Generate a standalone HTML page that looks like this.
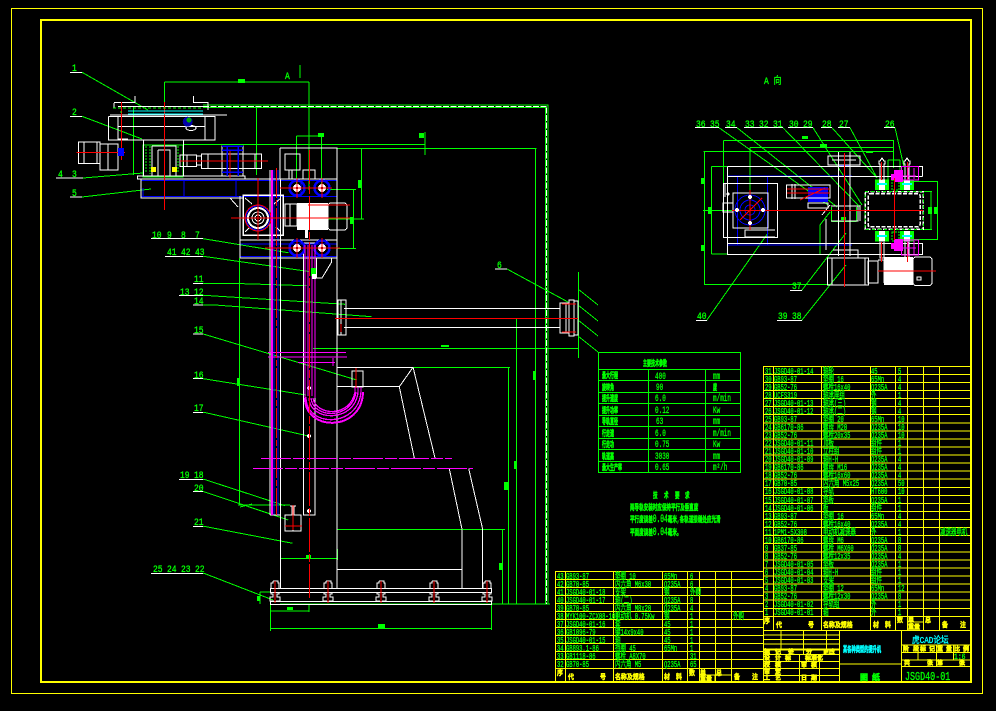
<!DOCTYPE html>
<html lang="zh"><head><meta charset="utf-8"><title>JSGD40-01</title>
<style>
html,body{margin:0;padding:0;background:#000;width:996px;height:711px;overflow:hidden}
svg{display:block}
text{font-family:"Liberation Mono","Noto Sans CJK SC",monospace;font-size:9px;fill:#0f0;stroke:#0f0;stroke-width:.35;transform-box:fill-box;transform-origin:0 50%;transform:scaleX(.61)}
.l{font-size:10px;transform:scaleX(.8)}
.v{font-size:10px;transform:scaleX(.6)}
.b{font-size:8px;font-weight:bold;stroke-width:.6;transform:scaleX(.5)}
.t{font-size:8px;font-weight:bold;stroke-width:.5;transform:scaleX(.57)}
.t tspan{font-size:11px;font-weight:normal}
.y{fill:#ff0;stroke:#ff0;font-size:7px;font-weight:bold;stroke-width:.5;transform:scaleX(.85)}
.s{fill:#ff0;stroke:#ff0;font-size:6px;font-weight:bold;stroke-width:.6;transform:none}
.c{fill:#0ff;stroke:#0ff}
.big{font-size:12px;transform:scaleX(.7)}
path,rect,circle,line{fill:none}
</style></head><body>
<svg width="996" height="711" viewBox="0 0 996 711" xmlns="http://www.w3.org/2000/svg" shape-rendering="crispEdges">
<defs>
<g id="ring"><circle r="7.5" stroke="#00f" stroke-width="2.5"/><circle r="4" style="fill:#fff"/><circle r="1.4" style="fill:#000"/><path d="M-10,0H10M0,-10V10" stroke="#f00"/></g>
<g id="bolt"><path d="M-2,581h5v2h1v5M-2,581v2h-2v5M-4,592v2h2v3h-3v4h4M4,592v2h-2v3h3v4h-4" stroke="#fff" stroke-width="1.3"/><path d="M0,581V603" stroke="#f00"/></g>
</defs>
<rect width="996" height="711" style="fill:#000"/>

<!-- frames -->
<rect x="11.5" y="8.5" width="971" height="685" stroke="#ff0"/>
<rect x="41" y="20" width="930" height="662" stroke="#ff0" stroke-width="2"/>

<!-- long dims / dashed -->
<g stroke="#0f0">
<path d="M203,105H548V108M203,107.5H545.5V604M548,108V604"/>
<path d="M183,144.3H425M425,132V155M133,148.3M337,148.3H536.7M535.7,148.3V604M516.7,319V604M508.3,367.3V604M502.3,529.3V604M413,367.3H510M337,529.3H505M313,348.3H578M578.3,272V358"/>
<path d="M280,604H550M260,592V604M260,592H270"/>
<path d="M578,289L598,305M578,305L598,321M578,320L598,336M578,336L598,352"/>
<path d="M270.3,604V631M309,604V612M491.7,604V630M270.3,611H309M270.3,628.3H491.7"/>
<path d="M280.7,549V560M337.3,549V560M280.7,558.3H337.3"/>
<path d="M164.3,82H309M164.3,82V125M309,82V190M133.3,107V175M256.7,107V175M300,65V78"/>
<path d="M296.7,136H321.7M296.7,136V188M321.7,136V188"/>
<path d="M361.7,148.3V219M328,219H364M353.3,189.3V248.7M327,189.3H356M337,248.7H356"/>
<path d="M239.3,258V505M238,505H290M240,507L252,504"/>
</g>
<path d="M203,106.4H546.7V604" stroke="#fff" stroke-dasharray="6 1.5"/>
<g style="fill:#0f0">
<rect x="238" y="79" width="7" height="4" style="fill:#0f0"/><rect x="318" y="133" width="6" height="4" style="fill:#0f0"/>
<rect x="358" y="180" width="4" height="8" style="fill:#0f0"/><rect x="350" y="217" width="4" height="7" style="fill:#0f0"/>
<rect x="419" y="133" width="5" height="5" style="fill:#0f0"/><rect x="514" y="461" width="3" height="8" style="fill:#0f0"/><rect x="533" y="371" width="3" height="9" style="fill:#0f0"/>
<rect x="504" y="482" width="4" height="8" style="fill:#0f0"/><rect x="499" y="563" width="3" height="7" style="fill:#0f0"/>
<rect x="237" y="378" width="3" height="8" style="fill:#0f0"/><rect x="306" y="555" width="5" height="4" style="fill:#0f0"/>
<rect x="287" y="607" width="6" height="3" style="fill:#0f0"/><rect x="378" y="624" width="7" height="4" style="fill:#0f0"/>
<rect x="257" y="596" width="3" height="5" style="fill:#0f0"/><rect x="441" y="345" width="8" height="2" style="fill:#0f0"/>
</g>

<!-- leaders -->
<g stroke="#0f0">
<path d="M70,72.3H82L148,110M70,116.3H82L142,139M56,178H83L143,173M70,197H82L151,189"/>
<path d="M151,238.7H203.3L288.3,252.7M165,256.3H203.3L310,271.7M193,283.3H230L306.7,285.7M179.3,295.7H210L345,304.3M193.3,305H215L371.7,316.7"/>
<path d="M193.3,334H203.3L356.7,380M193.3,378.7H203.3L306,395M193.3,412.3H204L308.3,436M179.3,479.3H204L285,505.7M193.3,491.7H204L288.3,520M193.3,526.3H204L292.7,543.3M151,573.3H204L273,600"/>
<path d="M495,269H507L568,302"/>
<path d="M719,127.7L828,205M737,127.7L837,207M783,127.7L860,207M813,127.7L862,205M832,127.7L877,178M850,127.7L877,178M895,127.7L904,167"/>
<path d="M790,290.3H801.7L846,233M777.3,320.3H801.7L846,265M696,320.3H706.7L768,233"/>
</g>
<path d="M70,72.3H82M70,116.3H82M56,178H83M70,197H82M151,238.7H203M165,256.3H203M193,283.3H203M179,295.7H203M193,305H203M193,334H203M193,378.7H203M193,412.3H203M179,479.3H203M193,491.7H203M193,526.3H203M151,573.3H203M495,269H507M695,127.7H719M725,127.7H737M744,127.7H783M788,127.7H813M821,127.7H832M838,127.7H850M884,127.7H895M790,290.3H802M777,320.3H802M696,320.3H707" stroke="#fff"/>

<!-- structure left -->
<g stroke="#0f0"><rect x="143" y="145" width="40" height="32"/></g>
<g stroke="#00f">
<path d="M141,180.7H337M141,196.7H337M143,188V196M184,181V196M236,181V196M240,240H337M240,244H337M240,256.5H337M274,170V515M278,170V515M301,181V196"/>
</g>
<g stroke="#fff">
<path d="M141,179H337V588M141,179V198H243M280,148H337V179M280,148V179M280.3,179V588"/>
<path d="M270,170V515M280.7,258V515M270,515H280"/>
<path d="M303.3,243V515H315V243H303.3"/>
<rect x="243" y="195" width="40" height="40" stroke-width="1.5"/>
<path d="M245,198L252,204M281,198L274,204M245,232L250,227M281,232L276,227"/>
<rect x="285" y="204" width="12" height="22"/><path d="M290,204V226"/>
<rect x="328" y="203" width="19" height="27" rx="3"/>
<path d="M240,240H337M240,258H337M240,240V258M240,196V240"/>
<rect x="285" y="154" width="15" height="16"/><path d="M292,170V179M289,170V179"/>
<rect x="303" y="170" width="12" height="9"/>
<path d="M230,198L238,207M316.7,258H331.7V262L322,278H316.7V258"/>
<path d="M108.3,116.7H215V140H108.3V116.7M118,117V140M205,117V140M114,102.7H135V96M135,102.7M114,103V108M193.3,96V102.7H208V110M118,106.7H203M110,115H227M118,126.7H205M118,139L128,139"/>
<path d="M78.3,142H100V163.3H78.3ZM84,142V163.3M97,142V163M100,144H118V170H100ZM108,144V170"/>
<path d="M143.3,140H183.3M143.3,140V176.7M183.3,140V176.7M152,146H176V176M152,146V176M158,150H170V176M158,150V176"/>
<path d="M180,155H196.7V166.7H180ZM187,155V166.7M201.7,154H261.7V168.3H201.7ZM208,154V168.3M255,154V168.3M196,156L202,156M196,165L202,165"/>
<rect x="222" y="146" width="21" height="30"/>
<path d="M137.3,176H245V179H137.3Z"/>
<ellipse cx="191" cy="128" rx="5" ry="2.5" stroke="#fff" style="fill:none"/>
<rect x="285" y="515" width="16" height="16"/><path d="M293,515V531M290,506H296M292,506V515M294,506V515"/>
<rect x="352" y="371" width="11" height="16"/>
</g>
<rect x="297" y="203" width="31" height="27" style="fill:#fff"/>
<rect x="305" y="230" width="3" height="8" style="fill:#fff"/>
<g stroke="#fff" style="fill:#fff"><circle cx="309" cy="388" r="1.6" style="fill:#fff"/><circle cx="309" cy="436" r="1.6" style="fill:#fff"/><circle cx="309" cy="511" r="1.6" style="fill:#fff"/></g>
<path d="M337,367.3H413L399.3,386.7H337M413,367L435,458M399.3,386.7L414.3,458M449.3,468.7L462,529.3M468.7,468.7L482.7,529.3M462,529.3V588M482.5,529.3V588M337,569.3H462" stroke="#fff"/>
<path d="M344,308.3H560M344,327.3H560" stroke="#fff"/>
<path d="M338,300H346V335H338ZM341,300V335M560,303H566V333H560ZM569,300H574V336H569ZM574,301H578V335H574ZM566,303H569M566,333H569" stroke="#fff"/>
<path d="M270.3,588.3H491.7V592.3H270.3ZM270.3,601.3H491.7V604.3H270.3Z" stroke="#fff"/>
<use href="#bolt" x="275"/><use href="#bolt" x="328"/><use href="#bolt" x="381"/><use href="#bolt" x="434"/><use href="#bolt" x="487"/>

<!-- gearbox circle -->
<circle cx="258" cy="218" r="13" stroke="#f00"/><circle cx="258" cy="218" r="12" stroke="#00f"/><circle cx="258" cy="218" r="10" stroke="#fff" stroke-width="2"/><circle cx="258" cy="218" r="6" stroke="#fff"/><circle cx="258" cy="218" r="3" stroke="#fff"/>
<use href="#ring" x="297" y="188"/><use href="#ring" x="322" y="188"/><use href="#ring" x="297" y="248"/><use href="#ring" x="322" y="248"/>

<!-- magenta -->
<g stroke="#f0f">
<path d="M272,170V515" stroke-width="2"/>
<path d="M305,245V398M308,245V396M312,245V396M315,245V398"/>
<path d="M306,397C306,428 358,428 361,392V387M309,398C310,422 355,423 358,392V387M313,398C316,416 350,418 355,392V387M311,398C313,419 352,420 356,392" stroke-width="1.3"/>
<path d="M305,398C305,432 362,432 363,392" stroke-width="2"/>
<path d="M268,352.3H346M268,357H347M298,362.3H335M333,358V366"/>
<path d="M261,458.3H452" stroke-dasharray="30 2 12 2"/>
<path d="M253,468.3H473" stroke-dasharray="30 2 12 2"/>
</g>

<!-- red -->
<g stroke="#f00">
<path d="M309.3,150V600" stroke-dasharray="34 2 8 2"/>
<path d="M276.7,168V515" stroke-dasharray="30 2 6 2"/>
<path d="M164.3,102V210M121.7,102V160M76.7,152.3H125M180,161H268M230,150V178M258,178V240M231,218H350M308,205H350M265,248H340M280,188H330"/>
<path d="M335,318.3H578M562,304H576M562,332H576M341,324V332"/>
<path d="M293,505V530M285,526H302M356,368V388"/>
</g>

<!-- upper cyan + details -->
<path d="M128,111H203M128,114H203" stroke="#0ff"/>
<path d="M113,108H203M120,112L122,112" stroke="#0f0" stroke-dasharray="3 2"/>
<circle cx="187.7" cy="121.7" r="5" style="fill:#00a"/><circle cx="189" cy="120" r="2.5" style="fill:#0a0"/>
<rect x="118" y="148" width="6" height="8" style="fill:#00f"/>
<path d="M146,146V172M150,146V174M178,146V172" stroke="#0f0" stroke-dasharray="2 1"/>
<rect x="151" y="167" width="5" height="5" style="fill:#ff0"/><rect x="172" y="167" width="5" height="5" style="fill:#ff0"/>
<path d="M222,146H243M222,150H243M222,172H243M227,146V176M238,146V176" stroke="#00f" stroke-width="1.5"/>
<rect x="311" y="268" width="5" height="8" style="fill:#0f0"/>
<rect x="312" y="274" width="4" height="5" style="fill:#fff"/>

<!-- ========== right view ========== -->
<g stroke="#0f0">
<path d="M723.3,140.3H893.3M750,147.3H893.3M703.3,151.7H893.3M723.3,140.3V186M750,147.3V193M704.7,151.7V284.3H830M711.3,166.7V254M711.3,166.7H727M711.3,254H727M703,210.3H737"/>
<path d="M893.3,140V168M913,181.7H938M913,239.3H938M937.7,181.7V239.3M923,191.7H932M923,229.3H932M931,191.7V229.3"/>
<path d="M831.7,221.7H856.7M831.7,207V221.7M856.7,207V221.7M888,160H900M888,160V180M900,160V180"/>
<path d="M820,254V225L830,212"/>
</g>
<g style="fill:#0f0"><rect x="802" y="136" width="6" height="3" style="fill:#0f0"/><rect x="820" y="144" width="7" height="3" style="fill:#0f0"/><rect x="866" y="151" width="7" height="2" style="fill:#0f0"/>
<rect x="701" y="178" width="4" height="6" style="fill:#0f0"/><rect x="701" y="245" width="4" height="6" style="fill:#0f0"/><rect x="708" y="207" width="4" height="7" style="fill:#0f0"/>
<rect x="928" y="207" width="4" height="7" style="fill:#0f0"/><rect x="934" y="207" width="4" height="7" style="fill:#0f0"/><rect x="841" y="217" width="5" height="3" style="fill:#0f0"/></g>
<g stroke="#00f">
<path d="M728,176H840M728,245H840M737.3,176V245M767.7,176V245M837,176H852M837,245H852"/>
<circle cx="750" cy="210" r="15"/><circle cx="750" cy="210" r="10"/><circle cx="750" cy="210" r="5"/>
<path d="M838,166H850" stroke-width="2"/>
</g>
<rect x="808" y="187" width="20" height="15" style="fill:#00f"/>
<g stroke="#fff">
<path d="M727.3,166.7H922.7V176.7M727.3,176.7H922.7M727.3,166.7V254.3H922.7V243.3H727.3M922.7,166.7V176.7"/>
<rect x="723.3" y="183.3" width="54.4" height="54.4"/>
<rect x="733" y="193" width="35" height="35"/>
<path d="M723,203H733V212H723ZM725,183V197M775,230H745V237H775M786.7,185H830V198H786.7ZM792,184V199M795,184V199M808,203H828V208H808Z"/>
<path d="M838.3,152V256M850,152V256M828,156H860V165H828ZM832,160H856M833,250H858V258H833"/>
<path d="M827.7,258H868.3V285H827.7ZM832,258V285M865,258V285M868,261H878V283H868ZM878,260H884V283"/>
<rect x="913" y="257" width="19" height="28.5" rx="3"/>
<path d="M826,219V250M822,215L830,205M831,206H858V221H831M860,205V221"/>
</g>
<rect x="884" y="257" width="29" height="28" style="fill:#fff"/>
<rect x="917" y="277" width="4" height="3" stroke="#fff"/>
<g stroke="#fff" stroke-width="1.5" stroke-dasharray="4 1.5">
<rect x="865" y="191.7" width="58.3" height="37.6"/>
<rect x="868" y="193.7" width="52" height="33" rx="2"/>
</g>
<g stroke="#0f0" stroke-dasharray="3 3"><rect x="865" y="191.7" width="58.3" height="37.6"/></g>
<!-- bearings -->
<g>
<rect x="875" y="179.3" width="14" height="10.7" style="fill:#0f0"/><rect x="900" y="179.3" width="14" height="10.7" style="fill:#0f0"/>
<rect x="875" y="231" width="14" height="10.7" style="fill:#0f0"/><rect x="900" y="231" width="14" height="10.7" style="fill:#0f0"/>
<rect x="879" y="179.3" width="6" height="10.7" style="fill:#fff"/><rect x="904" y="179.3" width="6" height="10.7" style="fill:#fff"/>
<rect x="879" y="231" width="6" height="10.7" style="fill:#fff"/><rect x="904" y="231" width="6" height="10.7" style="fill:#fff"/>
<path d="M877,184H887M902,184H912M877,236H887M902,236H912" stroke="#0ff" stroke-width="2"/>
<path d="M880,180V164h-1v-3h1l2,-3 2,3h1v3h-1V180M905,180V164h-1v-3h1l2,-3 2,3h1v3h-1V180M880,242V258h4V242M905,242V258h4V242" stroke="#fff"/>
<path d="M881.7,162V180M907.3,162V180M881.7,242V262M907.3,242V262" stroke="#f00"/>
<path d="M892,180H899V190H892ZM892,232H899V241H892Z" stroke="#0f0" stroke-dasharray="2 1"/>
</g>
<g>
<rect x="894" y="170" width="9" height="12" style="fill:#f0f"/><rect x="891" y="174" width="4" height="6" style="fill:#f0f"/>
<rect x="901.7" y="166.7" width="16.6" height="13.3" stroke="#f0f"/><path d="M903,176H916M908,168V179M914,168V179" stroke="#f0f"/>
<rect x="894" y="239" width="9" height="12" style="fill:#f0f"/><rect x="891" y="243" width="4" height="6" style="fill:#f0f"/>
<rect x="901.7" y="240" width="16.6" height="15" stroke="#f0f"/><path d="M903,248H916M908,241V254M914,241V254" stroke="#f0f"/>
</g>
<g stroke="#f00">
<path d="M732,210.3H923M844.3,153V287M894.3,178V240M750,190V230M740,220L762,198M878,271H936"/>
<path d="M787,189H830M787,193H830M800,200L825,188"/>
</g>
<g style="fill:#fff"><circle cx="750" cy="197" r="2" style="fill:#fff"/><circle cx="750" cy="223" r="2" style="fill:#fff"/><circle cx="737" cy="210" r="2" style="fill:#fff"/><circle cx="763" cy="210" r="2" style="fill:#fff"/><circle cx="728" cy="194" r="1.5" style="fill:#fff"/></g>

<!-- params table -->
<g stroke="#0f0">
<rect x="598.3" y="352.3" width="142.4" height="120.4"/>
<path d="M598,369.3H741M598,380.7H741M598,392.3H741M598,403.7H741M598,415.3H741M598,426.7H741M598,438.3H741M598,449.7H741M598,461.3H741M648.3,369.3V472.7M705.3,369.3V472.7"/>
</g>
<text class="b" x="643" y="366">主要技术参数</text>
<text class="b" x="602" y="378">最大行程</text><text class="v" x="655" y="379">400</text><text class="v" x="713" y="379">mm</text>
<text class="b" x="602" y="390">旋转角</text><text class="v" x="656" y="390">90</text><text class="b" x="713" y="390">度</text>
<text class="b" x="602" y="401">提升速度</text><text class="v" x="655" y="401">6.0</text><text class="v" x="713" y="401">m/min</text>
<text class="b" x="602" y="413">提升功率</text><text class="v" x="655" y="413">0.12</text><text class="v" x="713" y="413">Kw</text>
<text class="b" x="602" y="424">导轨直径</text><text class="v" x="656" y="424">63</text><text class="v" x="713" y="424">mm</text>
<text class="b" x="602" y="436">行走速</text><text class="v" x="655" y="436">6.0</text><text class="v" x="713" y="436">m/min</text>
<text class="b" x="602" y="447">行走功</text><text class="v" x="655" y="447">0.75</text><text class="v" x="713" y="447">Kw</text>
<text class="b" x="602" y="459">轨道高</text><text class="v" x="655" y="459">3030</text><text class="v" x="713" y="459">mm</text>
<text class="b" x="602" y="470">最大生产率</text><text class="v" x="655" y="470">0.65</text><text class="v" x="713" y="470">m²/h</text>

<!-- tech requirements -->
<text class="t" x="653" y="498">技</text><text class="t" x="664" y="498">术</text><text class="t" x="675" y="498">要</text><text class="t" x="685" y="498">求</text>
<text class="t" x="630" y="510">两导轨安装时应保持平行及垂直度</text>
<text class="t" x="630" y="522">平行度误差<tspan>0.04</tspan>毫米,各轨道接缝处应光滑</text>
<text class="t" x="630" y="535">平面度误差<tspan>0.04</tspan>毫米。</text>

<!-- bom right -->
<g stroke="#ff0">
<path d="M763.3,366.3H971M763.3,374.4H971M763.3,382.4H971M763.3,390.5H971M763.3,398.6H971M763.3,406.6H971M763.3,414.7H971M763.3,422.8H971M763.3,430.8H971M763.3,438.9H971M763.3,447H971M763.3,455H971M763.3,463.1H971M763.3,471.1H971M763.3,479.2H971M763.3,487.3H971M763.3,495.3H971M763.3,503.4H971M763.3,511.5H971M763.3,519.5H971M763.3,527.6H971M763.3,535.7H971M763.3,543.7H971M763.3,551.8H971M763.3,559.9H971M763.3,567.9H971M763.3,576H971M763.3,584.1H971M763.3,592.1H971M763.3,600.2H971M763.3,608.3H971M763.3,616.3H971"/>
<path d="M763.3,366V682M773.3,366V630M821.7,366V630M870.3,366V630M895.7,366V630M907.3,366V630M923.3,366V630M939.3,366V630"/>
<path d="M763,630.3H971M763,635H840M763,639.3H840M763,644H840M763,649H840M763,654.3H840M763,661.7H840M763,668.7H840M763,675.7H840M781,630V649M803.7,630V654M826.3,630V649M799.3,654V682M819.3,654V682"/>
<path d="M839.7,630V682M901.3,630V682M840,664H901M901,645H971M901,652.3H971M901,660H971M901,666.3H971M918,645V660M936.3,645V666M953.7,645V660M907,622H923"/>
<path d="M763,649.5H840" stroke-width="1.5"/>
</g>
<!-- bom left -->
<g stroke="#ff0">
<path d="M555.3,571.3H763M555.3,579.3H763M555.3,587.4H763M555.3,595.4H763M555.3,603.4H763M555.3,611.5H763M555.3,619.5H763M555.3,627.5H763M555.3,635.6H763M555.3,643.6H763M555.3,651.6H763M555.3,659.7H763M555.3,668.7H763"/>
<path d="M555.3,571V682M565.3,571V682M613.3,571V682M662.3,571V682M687.3,571V682M699.3,571V682M715.3,571V682M731.3,571V682M699,675H731M715,675V682"/>
</g>
<text x="765" y="374">31</text><text x="774" y="374">JSGD40-01-14</text><text x="823" y="374">轴轮</text><text x="871" y="374">45</text><text x="898" y="374">5</text>
<text x="765" y="382">30</text><text x="774" y="382">GB93-87</text><text x="823" y="382">垫圈 16</text><text x="871" y="382">65Mn</text><text x="898" y="382">4</text>
<text x="765" y="390">29</text><text x="774" y="390">GB52-76</text><text x="823" y="390">螺栓16x40</text><text x="871" y="390">Q235A</text><text x="898" y="390">4</text>
<text x="765" y="398">28</text><text x="774" y="398">UCFS319</text><text x="823" y="398">轴承座组</text><text x="871" y="398">外</text><text x="898" y="398">1</text>
<text x="765" y="406">27</text><text x="774" y="406">JSGD40-01-13</text><text x="823" y="406">轴承(三)</text><text x="871" y="406">钢</text><text x="898" y="406">4</text>
<text x="765" y="414">26</text><text x="774" y="414">JSGD40-01-12</text><text x="823" y="414">轴承(二)</text><text x="871" y="414">钢</text><text x="898" y="414">4</text>
<text x="765" y="422">25</text><text x="774" y="422">GB93-87</text><text x="823" y="422">垫圈 20</text><text x="871" y="422">65Mn</text><text x="898" y="422">10</text>
<text x="765" y="430">24</text><text x="774" y="430">GB6170-86</text><text x="823" y="430">螺母 M20</text><text x="871" y="430">Q235A</text><text x="898" y="430">10</text>
<text x="765" y="438">23</text><text x="774" y="438">GB52-76</text><text x="823" y="438">螺栓20x35</text><text x="871" y="438">Q235A</text><text x="898" y="438">10</text>
<text x="765" y="446">22</text><text x="774" y="446">JSGD40-01-11</text><text x="823" y="446">顶板</text><text x="871" y="446">组件</text><text x="898" y="446">1</text>
<text x="765" y="454">21</text><text x="774" y="454">JSGD40-01-10</text><text x="823" y="454">立柱组</text><text x="871" y="454">组件</text><text x="898" y="454">1</text>
<text x="765" y="462">20</text><text x="774" y="462">JSGD40-01-09</text><text x="823" y="462">轴H-H</text><text x="871" y="462">Q235A</text><text x="898" y="462">4</text>
<text x="765" y="470">19</text><text x="774" y="470">GB6170-86</text><text x="823" y="470">螺母 M16</text><text x="871" y="470">Q235A</text><text x="898" y="470">4</text>
<text x="765" y="478">18</text><text x="774" y="478">GB52-76</text><text x="823" y="478">螺栓16x60</text><text x="871" y="478">Q235A</text><text x="898" y="478">4</text>
<text x="765" y="486">17</text><text x="774" y="486">GB70-85</text><text x="823" y="486">内六角 M5x25</text><text x="871" y="486">Q235A</text><text x="898" y="486">50</text>
<text x="765" y="494">16</text><text x="774" y="494">JSGD40-01-08</text><text x="823" y="494">导轨</text><text x="871" y="494">HT600</text><text x="898" y="494">10</text>
<text x="765" y="503">15</text><text x="774" y="503">JSGD40-01-07</text><text x="823" y="503">垫板</text><text x="871" y="503">Q235A</text><text x="898" y="503">1</text>
<text x="765" y="511">14</text><text x="774" y="511">JSGD40-01-06</text><text x="823" y="511">板</text><text x="871" y="511">组件</text><text x="898" y="511">1</text>
<text x="765" y="519">13</text><text x="774" y="519">GB93-87</text><text x="823" y="519">垫圈 16</text><text x="871" y="519">65Mn</text><text x="898" y="519">4</text>
<text x="765" y="527">12</text><text x="774" y="527">GB52-76</text><text x="823" y="527">螺栓16x40</text><text x="871" y="527">Q235A</text><text x="898" y="527">4</text>
<text x="765" y="535">11</text><text x="774" y="535">1PM1-5X308</text><text x="823" y="535">电动机减速器</text><text x="871" y="535">外</text><text x="898" y="535">1</text><text x="940" y="535">减速器电机</text>
<text x="765" y="543">10</text><text x="774" y="543">GB6170-86</text><text x="823" y="543">螺母 M6</text><text x="871" y="543">Q235A</text><text x="898" y="543">8</text>
<text x="765" y="551">9</text><text x="774" y="551">GB37-85</text><text x="823" y="551">螺栓 M6X60</text><text x="871" y="551">Q235A</text><text x="898" y="551">8</text>
<text x="765" y="559">8</text><text x="774" y="559">GB52-76</text><text x="823" y="559">螺栓12x35</text><text x="871" y="559">Q235A</text><text x="898" y="559">4</text>
<text x="765" y="567">7</text><text x="774" y="567">JSGD40-01-05</text><text x="823" y="567">垫板</text><text x="871" y="567">Q235A</text><text x="898" y="567">1</text>
<text x="765" y="575">6</text><text x="774" y="575">JSGD40-01-04</text><text x="823" y="575">轴H-H</text><text x="871" y="575">组件</text><text x="898" y="575">1</text>
<text x="765" y="583">5</text><text x="774" y="583">JSGD40-01-03</text><text x="823" y="583">支架</text><text x="871" y="583">组件</text><text x="898" y="583">1</text>
<text x="765" y="591">4</text><text x="774" y="591">GB93-87</text><text x="823" y="591">垫圈 12</text><text x="871" y="591">65Mn</text><text x="898" y="591">12</text>
<text x="765" y="599">3</text><text x="774" y="599">GB52-76</text><text x="823" y="599">螺栓12x30</text><text x="871" y="599">Q235A</text><text x="898" y="599">8</text>
<text x="765" y="607">2</text><text x="774" y="607">JSGD40-01-02</text><text x="823" y="607">导轨组</text><text x="871" y="607">外</text><text x="898" y="607">1</text>
<text x="765" y="615">1</text><text x="774" y="615">JSGD40-01-01</text><text x="823" y="615">轴</text><text x="871" y="615">外</text><text x="898" y="615">1</text>

<text class="y" x="764" y="623">序</text><text class="y" x="776" y="627">代</text><text class="y" x="808" y="627">号</text><text class="y" x="823" y="627">名称及规格</text><text class="y" x="873" y="627">材</text><text class="y" x="885" y="627">料</text><text class="y" x="897" y="622">数</text><text class="y" x="908" y="622">单</text><text class="y" x="925" y="622">总</text><text class="s" x="908" y="629">重量</text><text class="y" x="942" y="627">备</text><text class="y" x="960" y="627">注</text>

<text x="557" y="579">43</text><text x="566" y="579">GB93-87</text><text x="615" y="579">垫圈 10</text><text x="664" y="579">65Mn</text><text x="690" y="579">6</text>
<text x="557" y="587">42</text><text x="566" y="587">GB70-85</text><text x="615" y="587">内六角 M6x30</text><text x="664" y="587">Q235A</text><text x="690" y="587">6</text>
<text x="557" y="595">41</text><text x="566" y="595">JSGD40-01-18</text><text x="615" y="595">支架</text><text x="664" y="595">钢</text><text x="690" y="595">外购</text>
<text x="557" y="603">40</text><text x="566" y="603">JSGD40-01-17</text><text x="615" y="603">轴(二)</text><text x="664" y="603">Q235A</text><text x="690" y="603">8</text>
<text x="557" y="611">39</text><text x="566" y="611">GB70-85</text><text x="615" y="611">内六角 M8x20</text><text x="664" y="611">Q235A</text><text x="690" y="611">4</text>
<text x="557" y="619">38</text><text x="566" y="619">MYK100-ZCX08-100</text><text x="615" y="619">电动机 0.75Kw</text><text x="664" y="619">钢</text><text x="690" y="619">1</text><text x="733" y="619">外购</text>
<text x="557" y="627">37</text><text x="566" y="627">JSGD40-01-16</text><text x="615" y="627">套</text><text x="664" y="627">45</text><text x="690" y="627">1</text>
<text x="557" y="635">36</text><text x="566" y="635">GB1096-79</text><text x="615" y="635">键14x9x40</text><text x="664" y="635">45</text><text x="690" y="635">1</text>
<text x="557" y="643">35</text><text x="566" y="643">JSGD40-01-15</text><text x="615" y="643">轴</text><text x="664" y="643">45</text><text x="690" y="643">1</text>
<text x="557" y="651">34</text><text x="566" y="651">GB893.1-86</text><text x="615" y="651">挡圈 45</text><text x="664" y="651">65Mn</text><text x="690" y="651">1</text>
<text x="557" y="659">33</text><text x="566" y="659">GB1118-86</text><text x="615" y="659">螺栓 A8X70</text><text x="690" y="659">31</text>
<text x="557" y="667">32</text><text x="566" y="667">GB70-85</text><text x="615" y="667">内六角 M5</text><text x="664" y="667">Q235A</text><text x="690" y="667">65</text>
<text class="y" x="557" y="675">序</text><text class="y" x="568" y="679">代</text><text class="y" x="600" y="679">号</text><text class="y" x="615" y="679">名称及规格</text><text class="y" x="664" y="679">材</text><text class="y" x="676" y="679">料</text><text class="y" x="689" y="675">数</text><text class="y" x="700" y="675">单</text><text class="y" x="716" y="675">总</text><text class="s" x="700" y="681">重量</text><text class="y" x="734" y="679">备</text><text class="y" x="752" y="679">注</text>

<!-- title block -->
<text class="c" style="font-size:8px;font-weight:bold;stroke-width:.6;transform:scaleX(.53)" x="843" y="652">某各种类型的提升机</text>
<text class="b" style="transform:none" x="860" y="680">图</text><text class="b" style="transform:none" x="872" y="680">纸</text>
<text class="big" x="905" y="680">JSGD40-01</text>
<text class="c" style="font-size:9px;transform:scaleX(.85)" x="912" y="643">虎CAD论坛</text>
<text class="s" x="764" y="654">标</text><text class="s" x="775" y="654">记</text><text class="s" x="788" y="654">处</text><text class="s" x="806" y="654">分</text><text class="s" x="823" y="654">更</text><text class="s" x="829" y="654">改</text>
<text class="s" x="764" y="660">设</text><text class="s" x="775" y="660">计</text><text class="s" x="785" y="660">标</text><text class="s" x="805" y="660">标准化</text>
<text class="s" x="764" y="667">校</text><text class="s" x="775" y="667">核</text><text class="s" x="801" y="667">审</text><text class="s" x="811" y="667">核</text>
<text class="s" x="764" y="674">审</text><text class="s" x="775" y="674">定</text>
<text class="s" x="764" y="680">工</text><text class="s" x="775" y="680">艺</text><text class="s" x="801" y="680">日</text><text class="s" x="811" y="680">期</text>
<text class="s" x="903" y="651">阶</text><text class="s" x="913" y="651">段</text><text class="s" x="920" y="651">标</text><text class="s" x="929" y="651">记</text><text class="s" x="937" y="651">重</text><text class="s" x="946" y="651">量</text><text class="s" x="954" y="651">比</text><text class="s" x="963" y="651">例</text>
<text class="s" x="904" y="665">共</text><text class="s" x="927" y="665">张</text><text class="s" x="937" y="665">第</text><text class="s" x="959" y="665">张</text>
<text class="l" x="954" y="659" style="font-size:8px">1:6</text>

<!-- labels -->
<g>
<text class="l" x="72" y="71">1</text><text class="l" x="72" y="115">2</text><text class="l" x="58" y="177">4</text><text class="l" x="72" y="177">3</text><text class="l" x="72" y="196">5</text>
<text class="l" x="152" y="238">10</text><text class="l" x="167" y="238">9</text><text class="l" x="181" y="238">8</text><text class="l" x="195" y="238">7</text>
<text class="l" x="167" y="255">41</text><text class="l" x="181" y="255">42</text><text class="l" x="195" y="255">43</text>
<text class="l" x="194" y="282">11</text><text class="l" x="180" y="295">13</text><text class="l" x="194" y="295">12</text><text class="l" x="194" y="304">14</text><text class="l" x="194" y="333">15</text><text class="l" x="194" y="378">16</text><text class="l" x="194" y="411">17</text>
<text class="l" x="180" y="478">19</text><text class="l" x="194" y="478">18</text><text class="l" x="194" y="491">20</text><text class="l" x="194" y="525">21</text>
<text class="l" x="153" y="572">25</text><text class="l" x="167" y="572">24</text><text class="l" x="181" y="572">23</text><text class="l" x="195" y="572">22</text>
<text class="l" x="497" y="268">6</text>
<text class="l" x="285" y="79">A</text><text class="l" x="764" y="84">A 向</text>
<text class="l" x="696" y="127">36</text><text class="l" x="710" y="127">35</text><text class="l" x="726" y="127">34</text><text class="l" x="745" y="127">33</text><text class="l" x="759" y="127">32</text><text class="l" x="773" y="127">31</text><text class="l" x="789" y="127">30</text><text class="l" x="803" y="127">29</text><text class="l" x="822" y="127">28</text><text class="l" x="839" y="127">27</text><text class="l" x="885" y="127">26</text>
<text class="l" x="792" y="289">37</text><text class="l" x="778" y="319">39</text><text class="l" x="792" y="319">38</text><text class="l" x="697" y="319">40</text>
</g>
</svg>
</body></html>
